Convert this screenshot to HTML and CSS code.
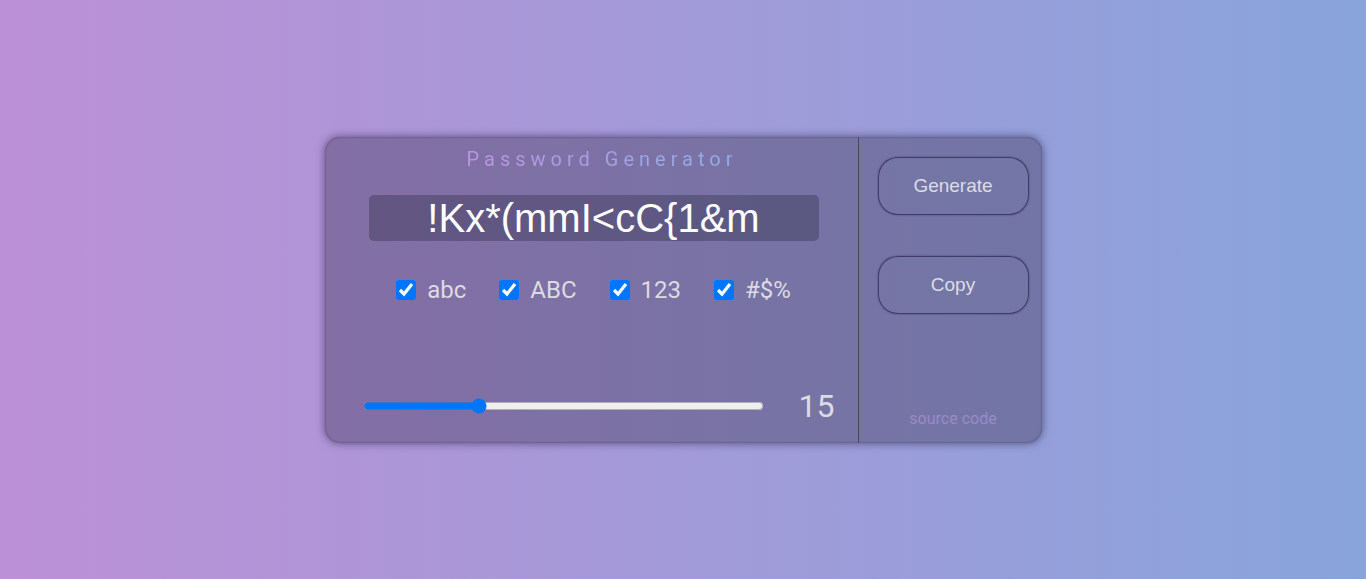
FILE: index.html
```html
<!DOCTYPE html>
<html lang="en">
<head>
<meta charset="utf-8">
<title>Password Generator</title>
<link rel="stylesheet" href="styles.css">
</head>
<body>
<main class="card">
  <section class="main-pane">
    <h1 class="title">Password Generator</h1>
    <div class="password">!Kx*(mmI&lt;cC{1&amp;m</div>
    <div class="options">
      <label class="option"><input type="checkbox" checked><span>abc</span></label>
      <label class="option"><input type="checkbox" checked><span>ABC</span></label>
      <label class="option"><input type="checkbox" checked><span>123</span></label>
      <label class="option"><input type="checkbox" checked><span>#$%</span></label>
    </div>
    <div class="length-row">
      <input class="slider" type="range" min="6" max="38" value="15">
      <span class="length">15</span>
    </div>
  </section>
  <aside class="side-pane">
    <button class="btn">Generate</button>
    <button class="btn">Copy</button>
    <a class="source" href="#">source code</a>
  </aside>
</main>
</body>
</html>
```

FILE: styles.css
```css
* { box-sizing: border-box; }
html, body { margin: 0; padding: 0; }
body {
  height: 100vh;
  background: linear-gradient(90deg, #bc90d6 0%, #88a4db 100%);
  display: flex;
  align-items: center;
  justify-content: center;
  font-family: Roboto, "Liberation Sans", sans-serif;
}
.card {
  width: 717px;
  height: 306px;
  display: flex;
  border-radius: 15px;
  background: rgba(42, 32, 62, 0.33);
  box-shadow: 0 0 8px rgba(20, 10, 40, 0.55), inset 0 0 2px rgba(20, 10, 40, 0.45);
  overflow: hidden;
}
.main-pane {
  width: 534px;
  border-right: 1px solid #454462;
  display: flex;
  flex-direction: column;
  padding-top: 10px;
}
.title {
  margin: 0;
  padding-left: 22px;
  text-align: center;
  font-size: 20px;
  font-weight: 400;
  letter-spacing: 5px;
  background: linear-gradient(90deg, #bf92e0 0%, #90aee4 100%);
  -webkit-background-clip: text;
  background-clip: text;
  color: transparent;
  align-self: center;
}
.password {
  margin: 24px 0 0 44px;
  width: 450px;
  height: 46px;
  border-radius: 5px;
  background: rgba(25, 30, 50, 0.3);
  color: #fff;
  font-family: "Liberation Sans", Arial, sans-serif;
  font-size: 40px;
  line-height: 46px;
  text-align: center;
}
.options {
  margin-top: 35px;
  padding-left: 5px;
  display: flex;
  justify-content: center;
  gap: 33px;
}
.option {
  display: flex;
  align-items: center;
  gap: 11px;
  font-size: 24px;
  line-height: 28px;
  color: #dcdbe2;
}
.option input {
  margin: 0;
  width: 20px;
  height: 20px;
  accent-color: #0075ff;
}
.length-row {
  margin-top: auto;
  padding: 0 0 18px 38px;
  display: flex;
  align-items: center;
}
.slider {
  margin: 0;
  width: 401px;
  accent-color: #0075ff;
}
.length {
  margin-left: 35px;
  font-size: 32px;
  line-height: 38px;
  color: #dcdbe2;
}
.side-pane {
  flex: 1;
  display: flex;
  flex-direction: column;
  align-items: center;
  padding: 20px 7px 0 13px;
}
.btn {
  width: 151px;
  height: 58px;
  border-radius: 20px;
  border: 1px solid rgba(45, 42, 80, 0.75);
  background: rgba(120, 125, 165, 0.15);
  box-shadow: 0 0 2px rgba(30, 25, 60, 0.5);
  color: #dddde4;
  font-family: "Liberation Sans", Arial, sans-serif;
  font-size: 19px;
  margin-bottom: 41px;
  padding: 0;
}
.source {
  margin-top: auto;
  padding-bottom: 15px;
  font-size: 16px;
  line-height: 19px;
  color: #9a8ac8;
  text-decoration: none;
}
```
